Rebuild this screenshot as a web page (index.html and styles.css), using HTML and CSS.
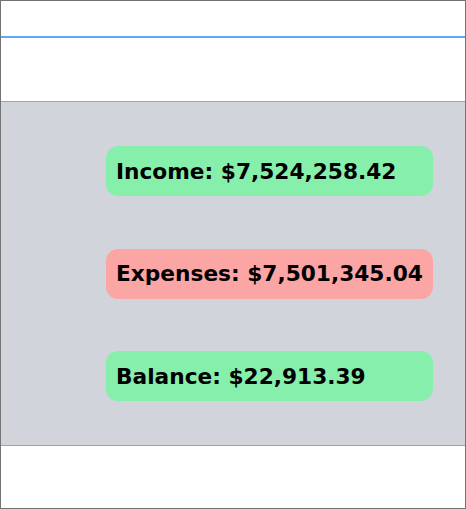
FILE: index.html
```html
<!DOCTYPE html>
<html>
<head>
<meta charset="utf-8">
<link rel="stylesheet" href="styles.css">
</head>
<body>
<div class="frame">
  <div class="topbar"></div>
  <div class="spacer"></div>
  <div class="panel">
    <div class="card card-green">Income: $7,524,258.42</div>
    <div class="card card-red">Expenses: $7,501,345.04</div>
    <div class="card card-green">Balance: $22,913.39</div>
  </div>
  <div class="footer"></div>
</div>
</body>
</html>
```
FILE: styles.css
```css
html, body {
  margin: 0;
  padding: 0;
  background: #ffffff;
}
.frame {
  box-sizing: border-box;
  width: 466px;
  height: 509px;
  border: 1px solid #737373;
  display: flex;
  flex-direction: column;
  font-family: "DejaVu Sans", sans-serif;
}
.topbar {
  height: 35px;
  border-bottom: 2px solid #60a5fa;
  flex: none;
}
.spacer {
  height: 63px;
  flex: none;
}
.panel {
  flex: none;
  box-sizing: border-box;
  height: 345px;
  background: #d1d5db;
  border-top: 1px solid #9ca3af;
  border-bottom: 1px solid #9ca3af;
  display: flex;
  flex-direction: column;
  align-items: flex-end;
  padding: 44px 32px 0 0;
  gap: 52.5px;
}
.card {
  width: 327px;
  height: 50px;
  flex: none;
  box-sizing: border-box;
  border-radius: 12px;
  padding: 0 10px;
  display: flex;
  align-items: center;
  font-weight: bold;
  font-size: 21.7px;
  color: #000;
  white-space: nowrap;
}
.card-green { background: #86efac; }
.card-red { background: #fca5a5; }
.footer { flex: 1; }
```
